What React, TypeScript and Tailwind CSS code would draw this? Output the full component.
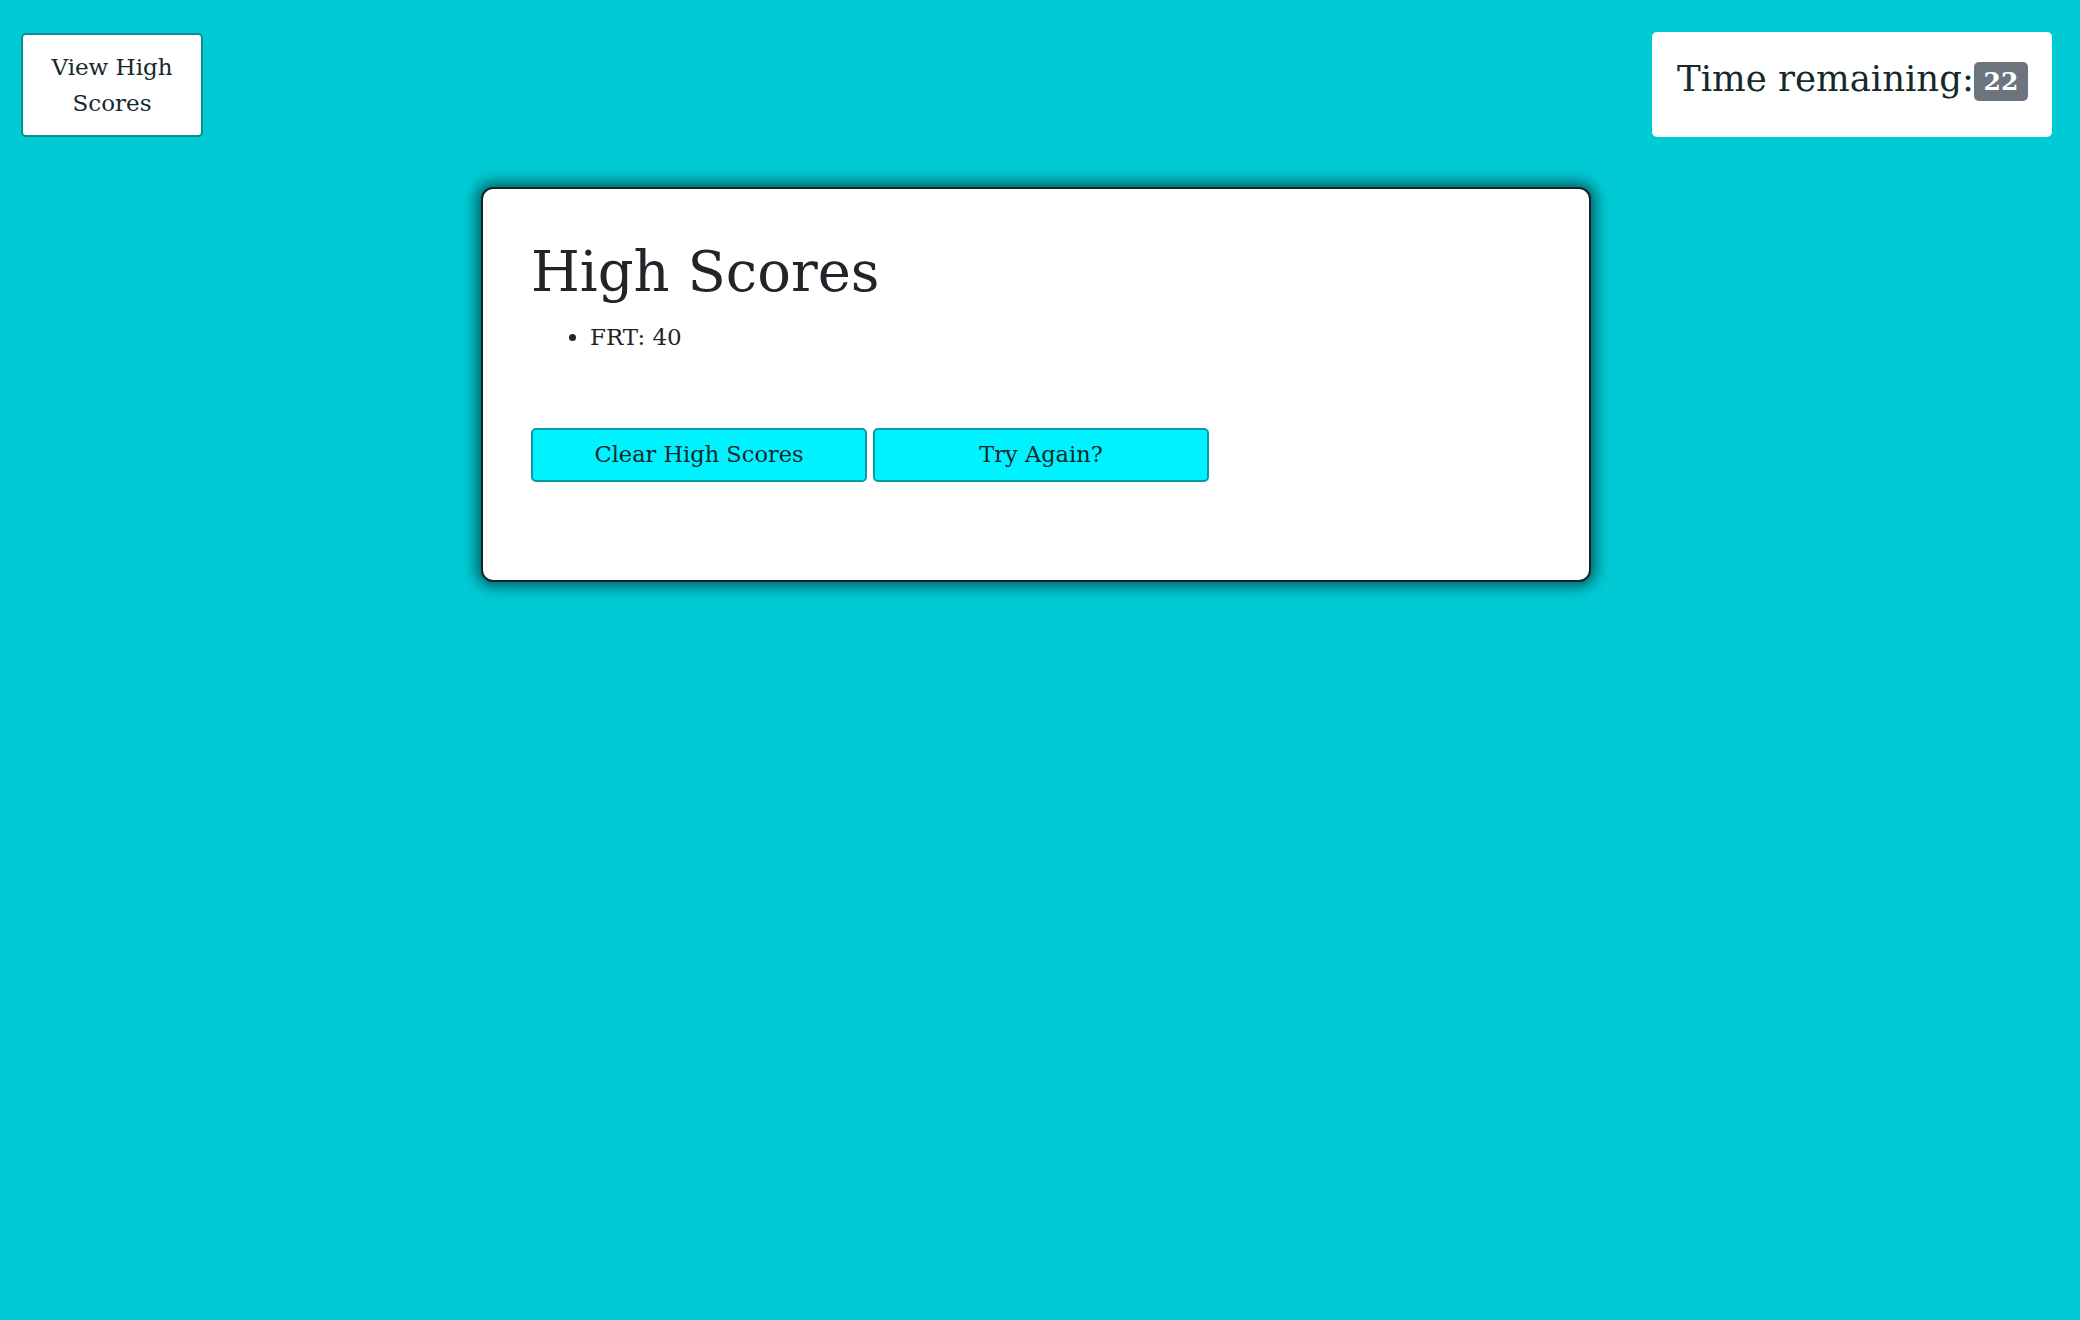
export default function App() {
  const serif = { fontFamily: '"DejaVu Serif", "Liberation Serif", serif' };
  return (
    <div className="min-h-[1320px] w-full bg-[#00cad4] text-[#212529]" style={serif}>
      <div className="flex items-start justify-between pl-[21px] pr-[28px] pt-[32px]">
        <button className="mt-[1px] flex h-[104px] w-[182px] flex-col items-center justify-center rounded-[5px] border-2 border-[#0b8f96] bg-white text-[23px] leading-[36px] text-[#13292b]">
          <span>View High</span>
          <span>Scores</span>
        </button>
        <div className="flex h-[105px] w-[400px] items-start rounded-[5px] bg-white pl-[25px] pt-[22px]">
          <span className="text-[35.5px] leading-[50px] text-[#13292b]">Time remaining:</span>
          <span className="ml-0 mt-[8px] flex h-[39px] w-[54px] items-center justify-center rounded-[5px] bg-[#6c757d] text-[25px] font-bold text-white">22</span>
        </div>
      </div>
      <div className="ml-[481px] mt-[50px] h-[395px] w-[1110px] rounded-[12px] border-2 border-[#142328] bg-white px-[48px] pt-[48px] shadow-[0_0_14px_5px_rgba(0,0,0,0.5)]">
        <h1 className="text-[56px] leading-[70px] text-[#212529]">High Scores</h1>
        <ul className="mt-[12px] list-disc pl-[59px] text-[23px] leading-[36px]">
          <li>FRT: 40</li>
        </ul>
        <div className="mt-[73px] flex gap-[6px]">
          <button className="h-[54px] w-[336px] rounded-[5px] border-2 border-[#0a9aa2] bg-[#00f2ff] text-[22.5px] text-[#13292b]">Clear High Scores</button>
          <button className="h-[54px] w-[336px] rounded-[5px] border-2 border-[#0a9aa2] bg-[#00f2ff] text-[22.5px] text-[#13292b]">Try Again?</button>
        </div>
      </div>
    </div>
  );
}
